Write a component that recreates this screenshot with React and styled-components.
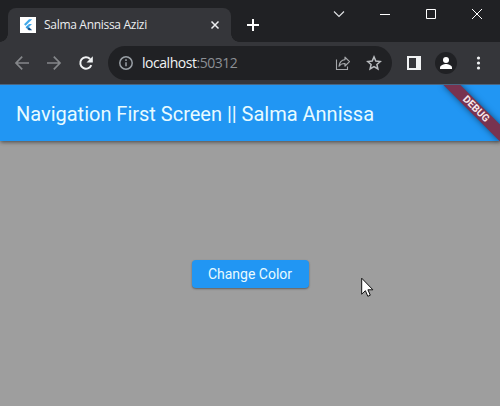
import React from "react";
import styled, { createGlobalStyle } from "styled-components";

const GlobalStyle = createGlobalStyle`
  * { box-sizing: border-box; }
  body { margin: 0; overflow: hidden; background: #9e9e9e; }
`;

const Window = styled.div`
  width: 500px;
  height: 406px;
  display: flex;
  flex-direction: column;
  overflow: hidden;
  position: relative;
  font-family: "Open Sans", "Noto Sans", sans-serif;
`;

const TitleBar = styled.header`
  height: 42px;
  flex: none;
  display: flex;
  align-items: flex-start;
  background: #202124;
  padding-left: 8px;
`;

const Tab = styled.div`
  position: relative;
  width: 223px;
  height: 34px;
  margin-top: 8px;
  padding: 0 10px 0 12px;
  display: flex;
  align-items: center;
  background: #35363a;
  border-radius: 8px 8px 0 0;
  &::before,
  &::after {
    content: "";
    position: absolute;
    bottom: 0;
    width: 8px;
    height: 8px;
  }
  &::before {
    left: -8px;
    background: radial-gradient(circle at 0 0, transparent 7.5px, #35363a 8px);
  }
  &::after {
    right: -8px;
    background: radial-gradient(circle at 100% 0, transparent 7.5px, #35363a 8px);
  }
`;

const Favicon = styled.span`
  width: 16px;
  height: 16px;
  background: #fff;
  display: flex;
`;

const TabTitle = styled.span`
  flex: 1;
  margin-left: 8px;
  color: #eceef0;
  font-size: 12px;
  line-height: 16px;
  letter-spacing: -0.3px;
  white-space: nowrap;
`;

const Icon = styled.svg`
  display: block;
  flex: none;
  width: ${(p) => p.$w || 16}px;
  height: ${(p) => p.$h || p.$w || 16}px;
`;

const NewTab = styled.div`
  margin: 17px 0 0 14px;
`;

const WindowControls = styled.div`
  margin-left: auto;
  margin-right: 15px;
  padding-top: 6px;
  display: flex;
  gap: 30px;
`;

const Toolbar = styled.nav`
  height: 43px;
  flex: none;
  display: flex;
  align-items: center;
  background: #35363a;
  padding: 0 13px 0 14px;
  border-bottom: 1px solid #4a6580;
`;

const NavButtons = styled.div`
  display: flex;
  gap: 16px;
`;

const Omnibox = styled.div`
  width: 284px;
  height: 34px;
  margin-left: 14px;
  padding: 0 10px;
  border-radius: 17px;
  background: #202124;
  display: flex;
  align-items: center;
`;

const Url = styled.div`
  flex: 1;
  margin-left: 8px;
  color: #f1f3f4;
  font-size: 14px;
  line-height: 18px;
  letter-spacing: -0.47px;
  white-space: nowrap;
`;

const Port = styled.span`
  color: #8b8f94;
`;

const Share = styled.div`
  margin-right: 16px;
`;

const Actions = styled.div`
  display: flex;
  align-items: center;
  margin-left: 14px;
`;

const Avatar = styled.div`
  width: 22px;
  height: 22px;
  margin: 0 14px 0 13px;
  border-radius: 50%;
  background: #202124;
  display: flex;
  align-items: center;
  justify-content: center;
`;

const Screen = styled.main`
  position: relative;
  flex: 1;
  overflow: hidden;
  display: flex;
  flex-direction: column;
  background: #9e9e9e;
  font-family: Roboto, sans-serif;
`;

const AppBar = styled.div`
  height: 56px;
  flex: none;
  display: flex;
  align-items: center;
  padding: 2px 16px 0;
  background: #2196f3;
  box-shadow: 0 2px 4px -1px rgba(0, 0, 0, 0.3), 0 1px 4px rgba(0, 0, 0, 0.3);
`;

const AppTitle = styled.h1`
  margin: 0;
  color: #e8fbff;
  font-size: 20px;
  font-weight: 400;
  line-height: 24px;
  letter-spacing: -0.01px;
  white-space: nowrap;
`;

const Body = styled.section`
  flex: 1;
  display: flex;
  justify-content: center;
  align-items: flex-start;
  padding-top: 119px;
`;

const ChangeButton = styled.button`
  width: 117px;
  height: 28px;
  padding: 0;
  border: 0;
  border-radius: 4px;
  background: #2196f3;
  color: #e8fbff;
  font: 400 14px/27px Roboto, sans-serif;
  box-shadow: 0 1px 2px rgba(0, 0, 0, 0.4);
`;

const Ribbon = styled.div`
  position: absolute;
  top: 0;
  left: 100%;
  width: 80px;
  height: 12px;
  transform-origin: 0 0;
  transform: rotate(45deg) translate(-40px, 28px);
  background: #783350;
  box-shadow: 0 0 6px rgba(0, 0, 0, 0.5);
  color: #f8e8ec;
  font-size: 10.2px;
  font-weight: 700;
  line-height: 12px;
  text-align: center;
`;

const Pointer = styled(Icon)`
  position: absolute;
  left: 361px;
  top: 277px;
`;

export default function App() {
  return (
    <Window>
      <GlobalStyle />
      <TitleBar>
        <Tab>
          <Favicon>
            <Icon viewBox="0 0 16 16">
              <path d="M9 2.2H12.2L5.6 8.8 4 7.2Z" fill="#42a9ea" />
              <path d="M9 7H12L8.7 10.3 7.2 8.8Z" fill="#42a9ea" />
              <path d="m5.6 10.2 1.7-1.7 1.7 1.7-1.7 1.7Z" fill="#2996df" />
              <path d="m7.3 11.9 1.7-1.7 3.2 3.1H8.8Z" fill="#124f88" />
            </Icon>
          </Favicon>
          <TabTitle>Salma Annissa Azizi</TabTitle>
          <Icon $w={12} viewBox="0 0 12 12">
            <path d="m2.5 2.5 7 7m0-7-7 7" stroke="#eceef0" strokeWidth="1.5" />
          </Icon>
        </Tab>
        <NewTab>
          <Icon viewBox="0 0 16 16">
            <path d="M8 2v12M2 8h12" stroke="#fff" strokeWidth="2" />
          </Icon>
        </NewTab>
        <WindowControls>
          <Icon viewBox="0 0 16 16">
            <path d="m3 5.5 5 5 5-5" fill="none" stroke="#e0e2e4" strokeWidth="1.15" />
          </Icon>
          <Icon viewBox="0 0 16 16">
            <path d="M3 8.5h10" stroke="#fff" />
          </Icon>
          <Icon viewBox="0 0 16 16">
            <path d="M3.5 3.5h9v9h-9Z" fill="none" stroke="#fff" />
          </Icon>
          <Icon viewBox="0 0 16 16">
            <path d="m3 3 10 10m0-10L3 13" stroke="#fff" />
          </Icon>
        </WindowControls>
      </TitleBar>
      <Toolbar>
        <NavButtons>
          <Icon viewBox="0 0 16 16">
            <path d="M15 8H2M8.2 1.7 2 8l6.2 6.3" fill="none" stroke="#85878a" strokeWidth="1.7" />
          </Icon>
          <Icon viewBox="0 0 16 16">
            <path d="M1 8h13M7.8 1.7 14 8l-6.2 6.3" fill="none" stroke="#85878a" strokeWidth="1.7" />
          </Icon>
          <Icon viewBox="0 0 16 16">
            <path d="M13.3 10.1A5.7 5.7 0 1 1 12.1 4" fill="none" stroke="#f1f3f4" strokeWidth="2" />
            <path d="M14.8 1.2v6.3H8.5Z" fill="#f1f3f4" />
          </Icon>
        </NavButtons>
        <Omnibox>
          <Icon viewBox="0 0 16 16">
            <circle cx="8" cy="8" r="6.2" fill="none" stroke="#9aa0a6" strokeWidth="1.5" />
            <path d="M8 7.2v4M8 4.3v1.6" stroke="#9aa0a6" strokeWidth="1.5" />
          </Icon>
          <Url>
            localhost<Port>:50312</Port>
          </Url>
          <Share>
            <Icon viewBox="-1 0 16 16">
              <path d="M1.5 4.5v10h11v-3" fill="none" stroke="#a5a7aa" strokeWidth="1.1" />
              <path
                d="M10 2.2 14.5 6.6 10 11V8.5C7.2 8.4 5.4 9.2 4 11.2 4.4 7.5 6.2 5.1 10 4.6Z"
                fill="none"
                stroke="#a5a7aa"
                strokeWidth="1.2"
                strokeLinejoin="round"
              />
            </Icon>
          </Share>
          <Icon viewBox="0 0 16 16">
            <path
              d="m8 1.9 1.8 4.2 4.5.4-3.4 3 1 4.5L8 11.6 4.1 14l1-4.5-3.4-3 4.5-.4Z"
              fill="none"
              stroke="#b9bcbf"
              strokeWidth="1.5"
            />
          </Icon>
        </Omnibox>
        <Actions>
          <Icon viewBox="0 0 16 16">
            <path d="M1 1h14v14H1ZM3 3v10h7V3Z" fill="#f1f3f4" fillRule="evenodd" />
          </Icon>
          <Avatar>
            <Icon viewBox="0 0 16 16">
              <circle cx="8" cy="5" r="3" fill="#fff" />
              <path d="M2 14v-1.5C2 10.2 6 9 8 9s6 1.2 6 3.5V14Z" fill="#fff" />
            </Icon>
          </Avatar>
          <Icon viewBox="0 0 16 16">
            <circle cx="7.5" cy="3" r="1.6" fill="#f1f3f4" />
            <circle cx="7.5" cy="8" r="1.6" fill="#f1f3f4" />
            <circle cx="7.5" cy="13" r="1.6" fill="#f1f3f4" />
          </Icon>
        </Actions>
      </Toolbar>
      <Screen>
        <AppBar>
          <AppTitle>Navigation First Screen || Salma Annissa</AppTitle>
        </AppBar>
        <Body>
          <ChangeButton>Change Color</ChangeButton>
        </Body>
        <Ribbon>DEBUG</Ribbon>
      </Screen>
      <Pointer $w={13} $h={21} viewBox="0 0 13 21">
        <path
          d="M.7 1.2v16l3.7-3.5 2.4 5.6 2.5-1.1-2.4-5.4h5Z"
          fill="#fff"
          stroke="#111"
          strokeWidth="1"
        />
      </Pointer>
    </Window>
  );
}
